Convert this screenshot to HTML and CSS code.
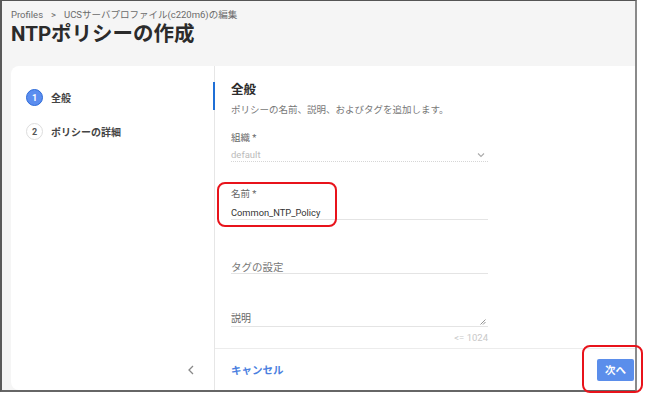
FILE: index.html
```html
<!DOCTYPE html>
<html lang="ja">
<head>
  <meta charset="UTF-8">
  <meta name="viewport" content="width=device-width, initial-scale=1.0">
  <title>NTPポリシーの作成</title>
  <link rel="stylesheet" href="styles.css">
</head>
<body>
<div class="frame">
  <div class="page-header">
    <div class="breadcrumb">
      <span>Profiles</span>
      <span class="sep">&gt;</span>
      <span>UCSサーバプロファイル(c220m6)の編集</span>
    </div>
    <h1 class="title">NTPポリシーの作成</h1>
  </div>

  <div class="card">
    <div class="nav">
      <div class="step active">
        <span class="step-num">1</span>
        <span class="step-label">全般</span>
      </div>
      <div class="step">
        <span class="step-num">2</span>
        <span class="step-label">ポリシーの詳細</span>
      </div>
      <div class="nav-collapse">
        <svg width="8" height="10" viewBox="0 0 8 10"><path d="M6 1 L2 5 L6 9" fill="none" stroke="#888" stroke-width="1.3"/></svg>
      </div>
    </div>

    <div class="panel">
      <div class="form">
        <div class="form-head">
          <h2>全般</h2>
          <p>ポリシーの名前、説明、およびタグを追加します。</p>
        </div>

        <div class="field org">
          <label>組織 *</label>
          <div class="select">
            <span>default</span>
            <svg width="8" height="6" viewBox="0 0 8 6"><path d="M1 1.5 L4 4.5 L7 1.5" fill="none" stroke="#aaa" stroke-width="1.1"/></svg>
          </div>
        </div>

        <div class="field name">
          <label>名前 *</label>
          <div class="input">Common_NTP_Policy</div>
        </div>

        <div class="field tags">
          <div class="input placeholder">タグの設定</div>
        </div>

        <div class="field desc">
          <div class="textarea">
            <span>説明</span>
            <svg width="6" height="6" viewBox="0 0 6 6"><path d="M5.5 0.5 L0.5 5.5 M5.5 3 L3 5.5" stroke="#888" stroke-width="0.9"/></svg>
          </div>
          <div class="counter">&lt;= 1024</div>
        </div>
      </div>

      <div class="footer">
        <span class="cancel">キャンセル</span>
        <button class="btn-next">次へ</button>
      </div>
    </div>
  </div>
</div>

<div class="mark mark-name"></div>
<div class="mark mark-next"></div>
</body>
</html>
```

FILE: styles.css
```css
body {
  margin: 0;
  background: #fff;
  font-family: Roboto, "Noto Sans CJK JP", sans-serif;
  color: #333;
}
.frame {
  box-sizing: border-box;
  width: 637px;
  height: 392px;
  background: #f5f5f5;
  border-top: 1px solid #555;
  border-left: 2px solid #5a5a5a;
  border-right: 2px solid #8a8a8a;
  border-bottom: 2px solid #666;
  overflow: hidden;
  display: flex;
  flex-direction: column;
}
.page-header {
  padding: 8px 0 0 9px;
}
.breadcrumb {
  font-size: 9.5px;
  line-height: 12px;
  color: #6b6b6b;
  display: flex;
  gap: 8px;
}
.title {
  margin: 0;
  font-size: 20.5px;
  line-height: 26px;
  font-weight: 700;
  color: #2b2b2b;
}
.card {
  margin: 19px 0 0 9px;
  flex: 1;
  background: #fff;
  border-radius: 8px 0 0 8px;
  display: flex;
}
.nav {
  width: 204px;
  border-right: 1px solid #e6e6e6;
  display: flex;
  flex-direction: column;
  padding: 23px 0 0 15px;
  box-sizing: border-box;
}
.step {
  display: flex;
  align-items: center;
  gap: 8px;
  height: 17px;
  margin-bottom: 17px;
}
.step-num {
  box-sizing: border-box;
  width: 17px;
  height: 17px;
  border-radius: 50%;
  border: 1.5px solid #ddd;
  color: #555;
  font-size: 9px;
  font-weight: 700;
  display: flex;
  align-items: center;
  justify-content: center;
}
.step.active .step-num {
  background: #5b8def;
  border-color: #2d6bd8;
  color: #fff;
}
.step-label {
  font-size: 10px;
  font-weight: 700;
  color: #444;
}
.nav-collapse {
  margin-top: auto;
  height: 41px;
  display: flex;
  align-items: center;
  justify-content: flex-end;
  padding-right: 19px;
}
.panel {
  flex: 1;
  display: flex;
  flex-direction: column;
}
.form {
  padding-left: 16px;
  width: 273px;
}
.form-head {
  position: relative;
  margin-top: 18px;
}
.form-head::before {
  content: "";
  position: absolute;
  left: -18px;
  top: -2px;
  width: 2px;
  height: 28px;
  background: #1f6fd6;
}
.form-head h2 {
  margin: 0;
  font-size: 12.5px;
  line-height: 12px;
  font-weight: 700;
  color: #2b2b2b;
}
.form-head p {
  margin: 8px 0 0;
  font-size: 9.5px;
  line-height: 12px;
  color: #777;
}
.field label {
  display: block;
  font-size: 9.5px;
  line-height: 12px;
  color: #666;
}
.field {
  width: 257px;
}
.org {
  margin-top: 16px;
}
.select {
  margin-top: 4px;
  height: 13px;
  line-height: 13px;
  font-size: 9.5px;
  color: #bbb;
  border-bottom: 1px dotted #d6d6d6;
  display: flex;
  justify-content: space-between;
  align-items: center;
  padding-right: 3px;
}
.name {
  margin-top: 26px;
}
.input {
  margin-top: 6px;
  height: 13px;
  line-height: 13px;
  font-size: 9.3px;
  color: #333;
  border-bottom: 1px solid #e4e4e4;
}
.tags {
  margin-top: 42px;
}
.input.placeholder {
  font-size: 10.5px;
  height: 11px;
  line-height: 11px;
  color: #777;
}
.desc {
  margin-top: 38px;
}
.textarea {
  height: 14px;
  font-size: 10px;
  line-height: 14px;
  color: #666;
  border-bottom: 1px solid #e4e4e4;
  display: flex;
  justify-content: space-between;
  align-items: flex-end;
  padding-right: 2px;
}
.textarea svg {
  margin-bottom: 1px;
}
.counter {
  margin-top: 6px;
  text-align: right;
  font-size: 9.5px;
  line-height: 10px;
  color: #c8c8c8;
}
.footer {
  margin-top: auto;
  height: 41px;
  border-top: 1px solid #ececec;
  display: flex;
  align-items: center;
  justify-content: space-between;
  padding: 0 1px 0 16px;
}
.cancel {
  font-size: 10.5px;
  font-weight: 700;
  color: #4b7fe0;
}
.btn-next {
  width: 37px;
  height: 22px;
  border: none;
  border-radius: 2px;
  background: #5b8eeb;
  color: #fff;
  font-family: inherit;
  font-size: 10.5px;
  font-weight: 700;
  padding: 0;
}
.mark {
  position: absolute;
  border: 2px solid #e8131b;
  border-radius: 8px;
  box-sizing: border-box;
}
.mark-name {
  left: 217px;
  top: 182px;
  width: 120px;
  height: 45px;
}
.mark-next {
  left: 582px;
  top: 345px;
  width: 61px;
  height: 48px;
}
```
